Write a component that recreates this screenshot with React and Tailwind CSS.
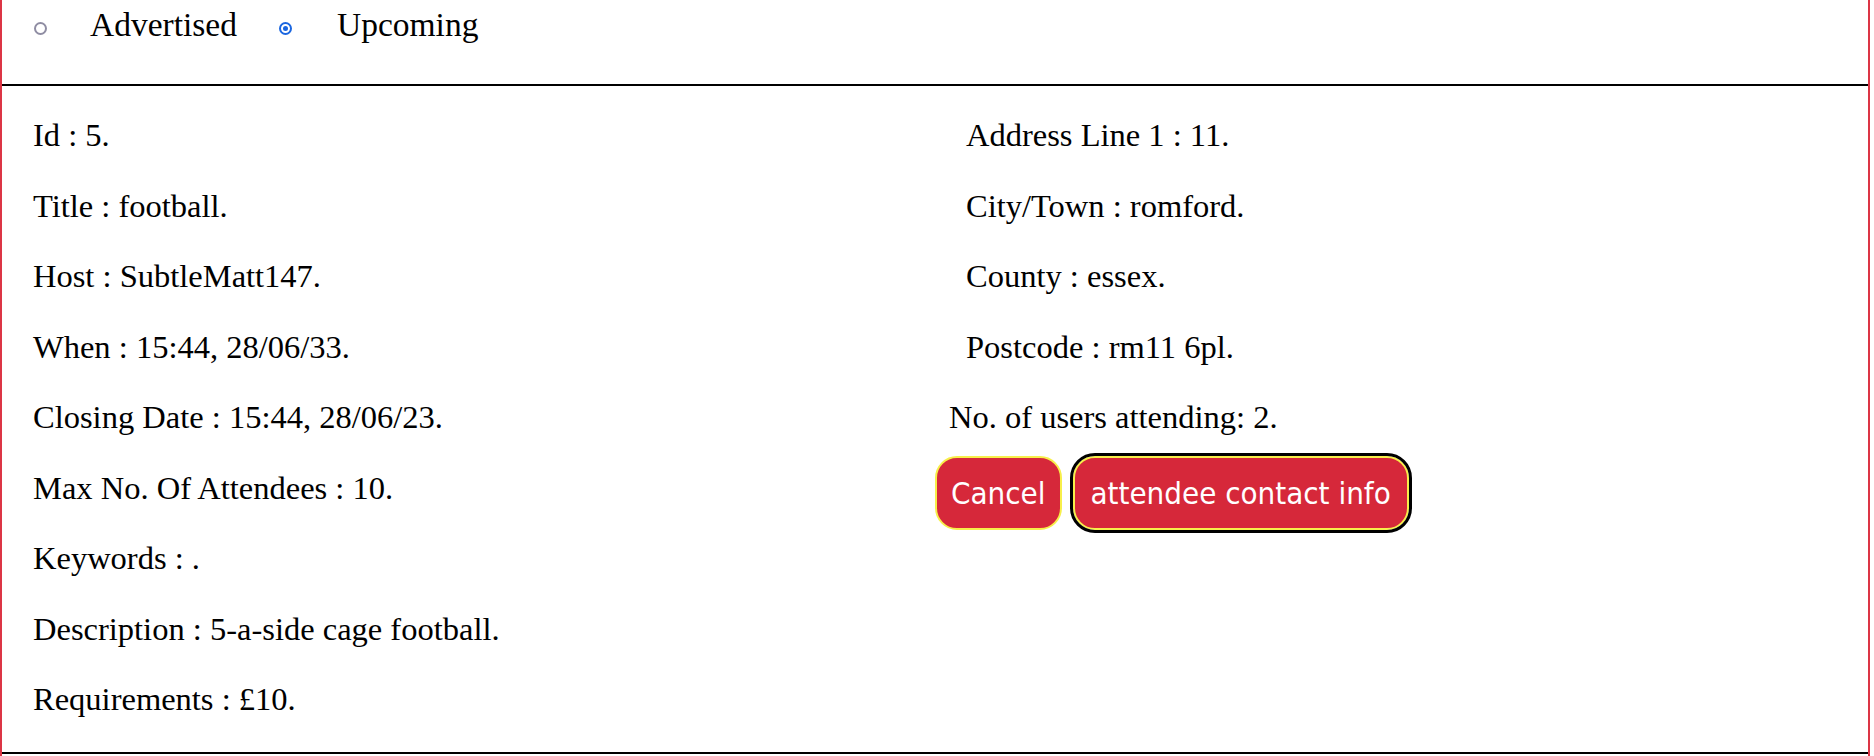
import React from "react";

const serif = { fontFamily: '"Liberation Serif", serif' };

const Radio = ({ checked }) =>
  checked ? (
    <span className="w-[13px] h-[13px] rounded-full border-[2px] border-[#1a66e0] flex items-center justify-center">
      <span className="w-[5px] h-[5px] rounded-full bg-[#1a66e0]" />
    </span>
  ) : (
    <span className="w-[13px] h-[13px] rounded-full border-[2px] border-[#8f8da3]" />
  );

const left = [
  "Id : 5.",
  "Title : football.",
  "Host : SubtleMatt147.",
  "When : 15:44, 28/06/33.",
  "Closing Date : 15:44, 28/06/23.",
  "Max No. Of Attendees : 10.",
  "Keywords : .",
  "Description : 5-a-side cage football.",
  "Requirements : £10.",
];

const address = [
  "Address Line 1 : 11.",
  "City/Town : romford.",
  "County : essex.",
  "Postcode : rm11 6pl.",
];

export default function App() {
  return (
    <div className="w-[1870px] h-[756px] bg-white border-x-2 border-[#dc3545] overflow-hidden text-black" style={serif}>
      <div className="h-[84px] flex items-start pt-[6px] text-[33.5px] leading-[38px]">
        <label className="flex items-center">
          <span className="w-[88px] flex pl-[32px] pt-[7px]">
            <Radio />
          </span>
          <span>Advertised</span>
        </label>
        <label className="flex items-center">
          <span className="w-[100px] flex pl-[42px] pt-[7px]">
            <Radio checked />
          </span>
          <span>Upcoming</span>
        </label>
      </div>

      <div className="border-y-2 border-black grid grid-cols-2 h-[670px] text-[32.5px] leading-[38px]">
        <div className="pl-[31px] pt-[30px] flex flex-col gap-[32.5px]">
          {left.map((t) => (
            <p key={t}>{t}</p>
          ))}
        </div>

        <div className="pt-[30px] flex flex-col gap-[32.5px]">
          {address.map((t) => (
            <p key={t} className="pl-[31px]">
              {t}
            </p>
          ))}
          <p className="pl-[14px]">No. of users attending: 2.</p>
          <div
            className="flex items-center -mt-[13px] text-white text-[31px]"
            style={{ fontFamily: '"DejaVu Sans Condensed", "DejaVu Sans", sans-serif' }}
          >
            <button className="h-[74px] px-[14px] rounded-[22px] bg-[#d6283a] border-2 border-[#f7ef4a]">
              Cancel
            </button>
            <button className="ml-[11px] h-[74px] px-[16px] rounded-[22px] bg-[#d6283a] border-2 border-[#f7ef4a] outline-[3px] outline-solid outline-black">
              attendee contact info
            </button>
          </div>
        </div>
      </div>
    </div>
  );
}
